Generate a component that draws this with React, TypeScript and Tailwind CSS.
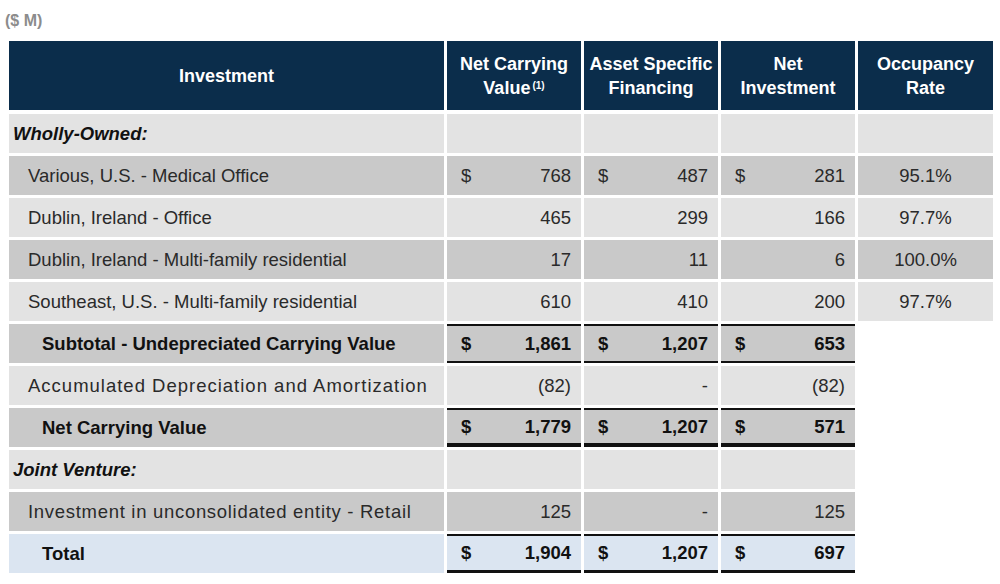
import React from 'react';

type Kind = 'section' | 'item' | 'sub' | 'total';

interface Row {
  label: string;
  kind: Kind;
  shade: 'light' | 'dark' | 'blue';
  values?: [string, string, string];
  dollar?: boolean;
  occ?: string;
  hasOcc: boolean;
  border?: 'sub' | 'net' | 'total';
  track?: string;
}

const rows: Row[] = [
  { label: 'Wholly-Owned:', kind: 'section', shade: 'light', hasOcc: true },
  { label: 'Various, U.S. - Medical Office', kind: 'item', shade: 'dark', values: ['768', '487', '281'], dollar: true, occ: '95.1%', hasOcc: true },
  { label: 'Dublin, Ireland - Office', kind: 'item', shade: 'light', values: ['465', '299', '166'], occ: '97.7%', hasOcc: true },
  { label: 'Dublin, Ireland - Multi-family residential', kind: 'item', shade: 'dark', values: ['17', '11', '6'], occ: '100.0%', hasOcc: true },
  { label: 'Southeast, U.S. - Multi-family residential', kind: 'item', shade: 'light', values: ['610', '410', '200'], occ: '97.7%', hasOcc: true },
  { label: 'Subtotal - Undepreciated Carrying Value', kind: 'sub', shade: 'dark', values: ['1,861', '1,207', '653'], dollar: true, hasOcc: false, border: 'sub' },
  { label: 'Accumulated Depreciation and Amortization', kind: 'item', shade: 'light', values: ['(82)', '-', '(82)'], hasOcc: false, track: 'tracking-[1px]' },
  { label: 'Net Carrying Value', kind: 'sub', shade: 'dark', values: ['1,779', '1,207', '571'], dollar: true, hasOcc: false, border: 'net' },
  { label: 'Joint Venture:', kind: 'section', shade: 'light', values: ['', '', ''], hasOcc: false },
  { label: 'Investment in unconsolidated entity - Retail', kind: 'item', shade: 'dark', values: ['125', '-', '125'], hasOcc: false, track: 'tracking-[0.7px]' },
  { label: 'Total', kind: 'total', shade: 'blue', values: ['1,904', '1,207', '697'], dollar: true, hasOcc: false, border: 'total' },
];

const shadeBg = {
  light: 'bg-[#e3e3e3]',
  dark: 'bg-[#c9c9c9]',
  blue: 'bg-[#dbe5f1]',
};

const borderCls = {
  sub: 'border-t-2 border-b-2 border-[#111]',
  net: 'border-t-2 border-b-[4px] border-b-double border-[#111]',
  total: 'border-t-2 border-b-[3px] border-[#111]',
};

function LabelCell({ row }: { row: Row }) {
  const base = `h-[39px] flex items-center whitespace-nowrap ${shadeBg[row.shade]}`;
  if (row.kind === 'section') {
    return (
      <div className={`${base} pl-[4px] text-[18.5px] font-bold italic text-[#111]`}>{row.label}</div>
    );
  }
  if (row.kind === 'sub' || row.kind === 'total') {
    return (
      <div className={`${base} pl-[33px] text-[18.5px] font-bold text-[#111]`}>{row.label}</div>
    );
  }
  return (
    <div className={`${base} pl-[19px] text-[18.5px] text-[#2a2a2a] ${row.track ?? ''}`}>{row.label}</div>
  );
}

function NumCell({ row, value }: { row: Row; value: string }) {
  const bold = row.kind === 'sub' || row.kind === 'total';
  return (
    <div
      className={`h-[39px] flex items-center justify-between pl-[14px] pr-[10px] text-[18.5px] ${shadeBg[row.shade]} ${
        row.border ? borderCls[row.border] : ''
      } ${bold ? 'font-bold text-[#111]' : 'text-[#2a2a2a]'}`}
    >
      <span>{row.dollar ? '$' : ''}</span>
      <span>{value}</span>
    </div>
  );
}

const headCls =
  'h-[69px] bg-[#0b2d4b] flex flex-col items-center justify-center text-white font-bold text-[18px] leading-[24px]';

export default function App() {
  return (
    <div className="w-[1000px] h-[584px] bg-white font-['Liberation_Sans',Arial,sans-serif]">
      <div className="pt-[9px] pl-[5px] h-[41px] text-[16px] font-bold text-[#8c8c8c]">($ M)</div>
      <div className="ml-[9px] grid grid-cols-[435px_134px_134px_134px_135px] gap-[3px]">
        {/* header */}
        <div className={`${headCls} mb-[1px]`}>Investment</div>
        <div className={headCls}>
          <span>Net Carrying</span>
          <span>
            Value<sup className="text-[10px] ml-[2px]">(1)</sup>
          </span>
        </div>
        <div className={headCls}>
          <span>Asset Specific</span>
          <span>Financing</span>
        </div>
        <div className={headCls}>
          <span>Net</span>
          <span>Investment</span>
        </div>
        <div className={headCls}>
          <span>Occupancy</span>
          <span>Rate</span>
        </div>

        {rows.map((row) => (
          <React.Fragment key={row.label}>
            <LabelCell row={row} />
            {row.values ? (
              row.values.map((v, i) => <NumCell key={i} row={row} value={v} />)
            ) : (
              <>
                <div className={`h-[39px] ${shadeBg[row.shade]}`} />
                <div className={`h-[39px] ${shadeBg[row.shade]}`} />
                <div className={`h-[39px] ${shadeBg[row.shade]}`} />
              </>
            )}
            {row.hasOcc ? (
              <div className={`h-[39px] flex items-center justify-center text-[18.5px] text-[#2a2a2a] ${shadeBg[row.shade]}`}>
                {row.occ ?? ''}
              </div>
            ) : (
              <div className="h-[39px]" />
            )}
          </React.Fragment>
        ))}
      </div>
    </div>
  );
}
